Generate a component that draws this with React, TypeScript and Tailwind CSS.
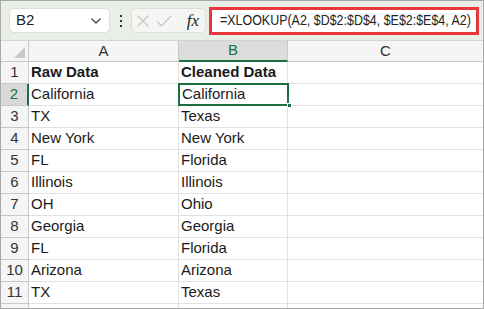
import React from 'react';

const rows: [string, string][] = [
  ['Raw Data', 'Cleaned Data'],
  ['California', 'California'],
  ['TX', 'Texas'],
  ['New York', 'New York'],
  ['FL', 'Florida'],
  ['Illinois', 'Illinois'],
  ['OH', 'Ohio'],
  ['Georgia', 'Georgia'],
  ['FL', 'Florida'],
  ['Arizona', 'Arizona'],
  ['TX', 'Texas'],
];

const App: React.FC = () => {
  return (
    <div
      className="w-[484px] h-[309px] overflow-hidden border border-[#a8a8a8] bg-white text-[#1a1a1a] flex flex-col"
      style={{ fontFamily: '"Liberation Sans", Arial, sans-serif' }}
    >
      {/* formula bar */}
      <div className="h-[39px] shrink-0 bg-[#e9eee6] flex items-center pl-[8px] pr-[4px]">
        <div className="shrink-0 w-[101px] h-[25px] bg-white rounded-[5px] border border-[#dcdfd9] flex items-center justify-between pl-[6px] pr-[7px]">
          <span className="text-[15px] text-[#222]">B2</span>
          <svg width="12" height="8" viewBox="0 0 12 8" fill="none" stroke="#444" strokeWidth="1.3">
            <path d="M1.5 1.5 6 6l4.5-4.5" />
          </svg>
        </div>
        <div className="shrink-0 w-[21px] flex flex-col items-center gap-[3px]">
          <span className="w-[2px] h-[2px] bg-[#333]" />
          <span className="w-[2px] h-[2px] bg-[#333]" />
          <span className="w-[2px] h-[2px] bg-[#333]" />
        </div>
        <div className="shrink-0 w-[75px] h-[25px] bg-[#f4f6f3] rounded-[5px] border border-[#dcdfd9] flex items-center pl-[4px] pr-[6px]">
          <svg width="14" height="14" viewBox="0 0 14 14" fill="none" stroke="#c4c4c4" strokeWidth="1.2">
            <path d="M1.5 1.5l11 11M12.5 1.5l-11 11" />
          </svg>
          <svg className="ml-[6px]" width="16" height="12" viewBox="0 0 16 12" fill="none" stroke="#c4c4c4" strokeWidth="1.2">
            <path d="M1 6.5l4.5 4.5L15 1" />
          </svg>
          <span
            className="ml-auto text-[17px] italic text-[#222] leading-none"
            style={{ fontFamily: '"Liberation Serif", "Times New Roman", serif' }}
          >
            fx
          </span>
        </div>
        <div className="ml-[3px] flex-1 min-w-0 overflow-hidden h-[28px] bg-white border-[3px] border-[#e8383d] flex items-center pl-[8px]">
          <span className="inline-block origin-left scale-x-[0.83] text-[15px] text-[#222] whitespace-nowrap">
            =XLOOKUP(A2, $D$2:$D$4, $E$2:$E$4, A2)
          </span>
        </div>
      </div>

      {/* grid */}
      <div className="flex-1 border-t border-[#d4d4d4]">
        {/* column headers */}
        <div className="flex h-[21px] text-[15px] text-[#333]">
          <div className="w-[28px] bg-[#f5f5f5] border-r border-b border-[#c8c8c8] relative">
            <div
              className="absolute right-[3px] bottom-[3px] w-[11px] h-[11px] bg-[#c9c9c9]"
              style={{ clipPath: 'polygon(100% 0, 100% 100%, 0 100%)' }}
            />
          </div>
          <div className="w-[150px] bg-[#f5f5f5] border-r border-b border-[#c8c8c8] flex items-center justify-center">A</div>
          <div className="w-[109px] bg-[#dcdcdc] border-r border-[#c8c8c8] border-b-2 border-b-[#1e6e43] flex items-center justify-center text-[#1e6e43]">
            B
          </div>
          <div className="flex-1 bg-[#f5f5f5] border-b border-[#c8c8c8] flex items-center justify-center">C</div>
        </div>

        {rows.map(([a, b], i) => {
          const n = i + 1;
          const sel = n === 2;
          const bold = n === 1;
          return (
            <div key={n} className="flex h-[22px] text-[15px]">
              <div
                className={
                  sel
                    ? 'w-[28px] bg-[#d9d9d9] border-r-2 border-r-[#1e6e43] border-b border-b-[#c8c8c8] flex items-center justify-center text-[#1e6e43]'
                    : 'w-[28px] bg-[#f5f5f5] border-r border-b border-[#c8c8c8] flex items-center justify-center text-[#333]'
                }
              >
                {n}
              </div>
              <div className={`w-[150px] border-r border-b border-[#e1e1e1] flex items-center pl-[2px] ${bold ? 'font-bold' : ''}`}>
                {a}
              </div>
              {sel ? (
                <div className="w-[109px] relative border-b border-[#e1e1e1]">
                  <div className="absolute -left-[1px] -top-[1px] w-[111px] h-[23px] border-2 border-[#1e6e43] flex items-center pl-[2px]">
                    {b}
                  </div>
                  <div className="absolute -right-[4px] -bottom-[3px] w-[5px] h-[5px] bg-[#1e6e43] border border-white" />
                </div>
              ) : (
                <div className={`w-[109px] border-r border-b border-[#e1e1e1] flex items-center pl-[2px] ${bold ? 'font-bold' : ''}`}>
                  {b}
                </div>
              )}
              <div className="flex-1 border-b border-[#e1e1e1]" />
            </div>
          );
        })}
        <div className="flex h-[22px]">
          <div className="w-[28px] bg-[#f5f5f5] border-r border-[#c8c8c8]" />
          <div className="w-[150px] border-r border-[#e1e1e1]" />
          <div className="w-[109px] border-r border-[#e1e1e1]" />
        </div>
      </div>
    </div>
  );
};

export default App;
